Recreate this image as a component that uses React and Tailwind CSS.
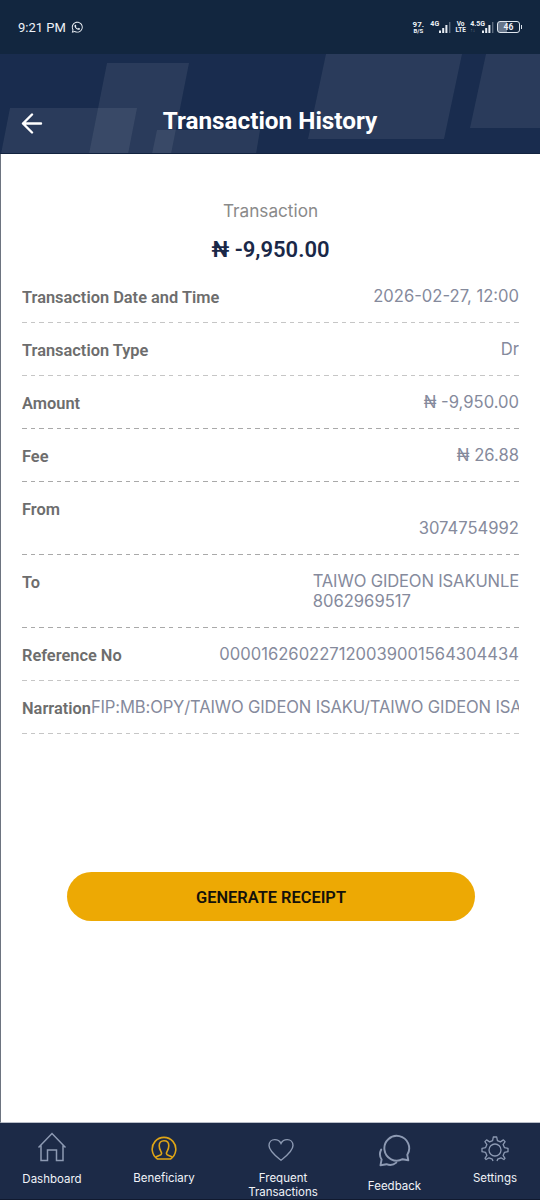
import { FaWhatsapp } from "react-icons/fa";

const details = [
  { label: "Transaction Date and Time", value: ["2026-02-27, 12:00"] },
  { label: "Transaction Type", value: ["Dr"] },
  { label: "Amount", value: ["₦ -9,950.00"], dark: true },
  { label: "Fee", value: ["₦ 26.88"], dark: true },
  { label: "From", value: ["\u00a0", "3074754992"], dark: true },
  {
    label: "To",
    value: ["TAIWO GIDEON ISAKUNLE", "8062969517"],
    dark: true,
    tight: true,
  },
  { label: "Reference No", value: ["000016260227120039001564304434"] },
  {
    label: "Narration",
    value: ["FIP:MB:OPY/TAIWO GIDEON ISAKU/TAIWO GIDEON ISA"],
    tight: true,
  },
];

const Signal = () => (
  <svg width="12" height="12" viewBox="0 0 12 12" fill="#e8edf4">
    <rect x="0" y="9.5" width="2" height="2.5" />
    <rect x="3.2" y="7" width="2" height="5" />
    <rect x="6.4" y="4" width="2" height="8" />
    <rect x="10" y="1" width="1.4" height="11" opacity="0.35" />
  </svg>
);

const StatusBar = () => (
  <div className="flex h-[54px] items-center justify-between bg-[#12263f] pl-[18px] pr-[18px] text-[#eef2f7]">
    <div className="flex items-center gap-[5px] text-[13px] leading-none">
      <span>9:21 PM</span>
      <FaWhatsapp size={12.5} />
    </div>

    <div className="flex items-center font-bold leading-none">
      <div className="mr-[6px] flex w-[12px] flex-col items-center">
        <span className="text-[8px] leading-[7px]">97.</span>
        <span className="text-[6px] leading-[6px]">B/S</span>
      </div>
      <div className="mr-[4px] flex h-[12px]">
        <span className="text-[7px] leading-[7px]">4G</span>
        <Signal />
      </div>
      <div className="mr-[4px] flex w-[11px] flex-col items-center text-[6.5px] leading-[6.5px]">
        <span>Vo</span>
        <span>LTE</span>
      </div>
      <div className="mr-[3px] flex h-[12px]">
        <div className="-mr-[3px] flex flex-col">
          <span className="text-[7px] leading-[7px]">4.5G</span>
          <span className="text-[5px] leading-[5px] opacity-35">↑↓</span>
        </div>
        <Signal />
      </div>
      <div className="flex h-[12px] w-[23px] items-center justify-center rounded-[3px] border border-[#dfe6ee] bg-linear-to-r from-[#66758a] from-45% to-transparent to-45% text-[8.5px]">
        46
      </div>
      <div className="ml-px h-1 w-px bg-[#dfe6ee]" />
    </div>
  </div>
);

const Header = () => (
  <div className="relative h-[100px] bg-[#192c4e]">
    <svg
      className="absolute inset-0"
      width="540"
      height="100"
      viewBox="0 54 540 100"
      fill="#fff"
      fillOpacity="0.075"
    >
      <path d="M107 63H189L171 154H89Z" />
      <path d="M10 108H137L128 154H1Z" />
      <path d="M157 130H260L256 154H152Z" />
      <path d="M326 54H462L444 139H308Z" />
      <path d="M486 54H540V128H470Z" />
    </svg>
    <div className="relative flex h-full items-end justify-center border-b border-[#12233f] pb-[18px]">
      <svg
        className="absolute left-[21px] top-[59px]"
        width="22"
        height="22"
        viewBox="0 0 22 22"
        fill="none"
        stroke="#fff"
        strokeWidth="2.4"
        strokeLinecap="round"
        strokeLinejoin="round"
      >
        <path d="M20 10.5H2M11 1.5L2 10.5L11 19.5" />
      </svg>
      <h1 className="text-[24.3px] font-bold leading-[28px] text-white">
        Transaction History
      </h1>
    </div>
  </div>
);

const DetailRow = ({ label, value, dark, tight }) => (
  <div>
    <div className="flex justify-between overflow-hidden pb-[15px] pt-[17px] leading-5">
      <div className="-mb-px shrink-0 pt-px text-[16.4px] font-semibold text-[#6d6d6d]">
        {label}
      </div>
      <div className="-mt-px h-fit whitespace-nowrap pb-px font-[Inter,sans-serif] text-[16.6px] text-[#858a9c]">
        {value.map((line) => (
          <div key={line} className={tight ? "first:tracking-[-0.15px]" : ""}>
            {line}
          </div>
        ))}
      </div>
    </div>
    <div
      className={
        dark
          ? "h-px bg-[repeating-linear-gradient(90deg,#a9a9a9_0_4.6px,transparent_4.6px_8.64px)]"
          : "h-px bg-[repeating-linear-gradient(90deg,#c6c6c6_0_4.6px,transparent_4.6px_8.64px)]"
      }
    />
  </div>
);

const HomeIcon = () => (
  <svg width="30" height="30" viewBox="0 0 30 30" fill="none" stroke="#8d9ab3" strokeWidth="1.5">
    <path d="M1.5 15.5L15 1.5L28.5 15.5M4 13.5V28.5H10.5V18H19.5V28.5H26V13.5" />
  </svg>
);

const PersonIcon = () => (
  <svg width="26" height="26" viewBox="0 0 26 26" fill="none" stroke="#dfa516" strokeWidth="1.6">
    <path d="M6.5 23A11.8 11.8 0 1 1 19.5 23Z" />
    <path d="M4.5 21.3C7 19.5 10.6 19.6 10.6 17.5C10.6 15.5 8.2 14 8.2 9.7C8.2 6.5 10 4.7 13 4.7S17.8 6.5 17.8 9.7C17.8 14 15.4 15.5 15.4 17.5C15.4 19.6 19 19.5 21.5 21.3" />
  </svg>
);

const HeartIcon = () => (
  <svg width="26" height="24" viewBox="0 0 26 24" fill="none" stroke="#8d9ab3" strokeWidth="1.4">
    <path d="M13 22.3C8 18.3 1 13.3 1 7.6C1 4 3.6 1.6 6.8 1.6C9.6 1.6 11.8 3 13 5.4C14.2 3 16.4 1.6 19.2 1.6C22.4 1.6 25 4 25 7.6C25 13.3 18 18.3 13 22.3Z" />
  </svg>
);

const ChatIcon = () => (
  <svg width="33" height="33" viewBox="0 0 33 33" fill="none" stroke="#8d9ab3" strokeWidth="1.9" strokeLinejoin="round" strokeLinecap="round">
    <path d="M29.3 20.8L30.3 26.3L24.6 25.2A12.4 12.4 0 1 1 29.3 20.8Z" />
    <path d="M3.2 15.5C1.4 19 1.6 22.5 3.6 25.5L2.5 31.3L8.5 30.2C12 31.6 15.5 31 18.3 28.6" />
  </svg>
);

const GearIcon = () => (
  <svg width="28" height="28" viewBox="0 0 28 28" fill="none" stroke="#8d9ab3" strokeWidth="1.3" strokeLinejoin="round">
    <circle cx="14" cy="14" r="6" />
    <path d="M16 25L16.7 23.2L20 21.8L22.9 23.5L24 22.4L22.1 19.4L23.4 16.4L27 15.7V12.3L23.4 11.6L22.1 8.6L24.1 5.6L22.4 3.9L19.4 5.9L16.4 4.6L15.7 1H12.3L11.6 4.6L8.6 5.9L5.6 3.9L3.9 5.6L5.9 8.6L4.6 11.6L1 12.3V15.7L4.6 16.4L5.9 19.4L4 22.4L5.1 23.5L8 21.8L11.3 23.2L12 25" />
  </svg>
);

const BottomNav = () => (
  <div className="flex h-[77px] justify-between border-b border-[#10192f] bg-[#1c2a47] pl-[22px] pr-[22px] text-center font-[Inter,sans-serif] text-[11.5px] leading-[14px] text-[#f0f3f8]">
    <div className="flex w-[60px] flex-col items-center pt-[9px]">
      <HomeIcon />
      <span className="mt-[10px]">Dashboard</span>
    </div>
    <div className="flex w-[60px] flex-col items-center pt-[13px]">
      <PersonIcon />
      <span className="mt-[9px]">Beneficiary</span>
    </div>
    <div className="flex w-[70px] flex-col items-center pt-[15px]">
      <HeartIcon />
      <span className="mt-[9px] pl-1">
        Frequent
        <br />
        Transactions
      </span>
    </div>
    <div className="flex w-[52px] flex-col items-center pt-[11px]">
      <ChatIcon />
      <span className="mt-[12px] pl-px">Feedback</span>
    </div>
    <div className="flex w-[46px] flex-col items-center pt-[13px]">
      <GearIcon />
      <span className="mt-[7px]">Settings</span>
    </div>
  </div>
);

export default function App() {
  return (
    <div className="flex h-[1200px] w-[540px] flex-col overflow-hidden bg-white font-[Roboto,sans-serif]">
      <StatusBar />
      <Header />

      {/* CONTENT */}
      <div className="flex flex-1 flex-col border-b border-l border-b-[#b9bec9] border-l-[#6d7480] pl-[21px] pr-[21px]">
        <div className="pt-[46px] text-center font-[Inter,sans-serif] text-[17.2px] leading-[22px] text-[#8a8a8a]">
          Transaction
        </div>
        <div className="mt-[14px] text-center text-[22px] font-semibold leading-[28px] text-[#1a2848]">
          ₦ -9,950.00
        </div>

        <div className="mt-[6px]">
          {details.map((row) => (
            <DetailRow key={row.label} {...row} />
          ))}
        </div>

        <button className="ml-[45px] mr-[44px] mt-[138px] h-[49px] rounded-full bg-[#eda904] pt-[3px] text-[16.4px] font-semibold text-[#14110a]">
          GENERATE RECEIPT
        </button>
      </div>

      <BottomNav />
    </div>
  );
}
